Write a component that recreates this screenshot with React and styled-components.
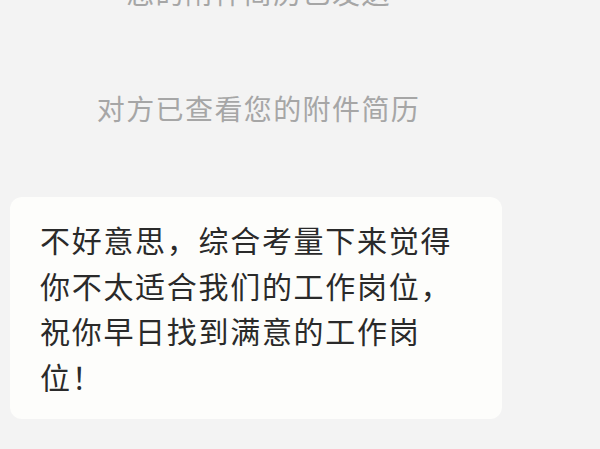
import React from "react";
import styled, { createGlobalStyle } from "styled-components";

const GlobalStyle = createGlobalStyle`
  html, body {
    margin: 0;
    padding: 0;
    background: #f3f3f3;
  }
  body {
    font-family: "Noto Sans CJK SC", "Noto Sans", sans-serif;
  }
`;

const Screen = styled.div`
  width: 600px;
  height: 449px;
  overflow: hidden;
  background: #f3f3f3;
  display: flex;
  flex-direction: column;
`;

const Notice = styled.div`
  width: 517px;
  text-align: center;
  font-size: 28px;
  line-height: 36px;
  letter-spacing: 1.4px;
  color: #a6a6a6;
  white-space: nowrap;
  margin-top: ${(p) => p.$top}px;
`;

const Bubble = styled.div`
  margin: 71px 0 0 10px;
  width: 492px;
  box-sizing: border-box;
  padding: 20px 0 20px 30px;
  background: #fdfdfb;
  border-radius: 12px;
  font-size: 30px;
  line-height: 45.6px;
  letter-spacing: 1.7px;
  color: #2a2a2a;
  white-space: nowrap;
`;

const Line = styled.div``;

const lines = [
  "不好意思，综合考量下来觉得",
  "你不太适合我们的工作岗位，",
  "祝你早日找到满意的工作岗",
  "位！",
];

export default function App() {
  return (
    <>
      <GlobalStyle />
      <Screen>
        <Notice $top={-26}>您的附件简历已发送</Notice>
        <Notice $top={80}>对方已查看您的附件简历</Notice>
        <Bubble>
          {lines.map((l, i) => (
            <Line key={i}>{l}</Line>
          ))}
        </Bubble>
      </Screen>
    </>
  );
}
